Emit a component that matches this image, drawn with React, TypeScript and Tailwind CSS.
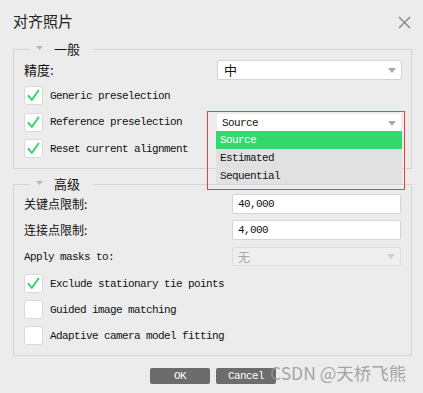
import React from "react";

const mono = "font-['Liberation_Mono',monospace] text-[11px] tracking-[-0.6px] leading-[14px]";
const cjk = "font-['Noto_Sans_CJK_SC',sans-serif]";

function Check() {
  return (
    <svg width="13" height="13" viewBox="0 0 13 13" fill="none">
      <path d="M1.5 6.8 L4.8 11 L11.5 1.5" stroke="#37d36c" strokeWidth="2" strokeLinecap="round" strokeLinejoin="round" />
    </svg>
  );
}

function Checkbox({ checked, label }: { checked: boolean; label: string }) {
  return (
    <div className="flex items-center h-[19px]">
      <div className="w-[19px] h-[19px] bg-white border border-[#d9d9d9] rounded-[3px] flex items-center justify-center">
        {checked && <Check />}
      </div>
      <span className={`${mono} ml-[7px] text-[#111]`}>{label}</span>
    </div>
  );
}

function Arrow({ light }: { light?: boolean }) {
  return (
    <svg width="8" height="5" viewBox="0 0 8 5">
      <path d="M0 0 L8 0 L4 5 Z" fill={light ? "#d0d0d0" : "#a9a9a9"} />
    </svg>
  );
}

function Legend({ text }: { text: string }) {
  return (
    <legend className="ml-[6px] px-[6px] h-[14px]">
      <div className="flex items-center h-[14px]">
        <svg width="7" height="4" viewBox="0 0 7 4" className="mb-[2px]">
          <path d="M0 0 L7 0 L3.5 4 Z" fill="#b4b4b4" />
        </svg>
        <span className={`${cjk} text-[13px] leading-[14px] text-[#111] ml-[11px] mr-[7px]`}>{text}</span>
      </div>
    </legend>
  );
}

export default function App() {
  return (
    <div className="w-[423px] h-[393px] bg-[#ececec] relative overflow-hidden text-[#111]">
      {/* Title bar */}
      <div className="flex items-center justify-between pt-[12px] pl-[13px] pr-[12px] h-[30px]">
        <span className={`${cjk} text-[15px] leading-[18px] text-[#222]`}>对齐照片</span>
        <svg width="13" height="13" viewBox="0 0 13 13" className="mt-[3px]">
          <path d="M1 1 L12 12 M12 1 L1 12" stroke="#8c8c8c" strokeWidth="1.5" />
        </svg>
      </div>

      {/* General */}
      <fieldset className="ml-[13px] mt-[12px] w-[399px] border border-[#d4d4d4] pl-[10px] pr-[10px] pt-[4px] pb-[10px]">
        <Legend text="一般" />
        <div className="flex items-center justify-between h-[20px]">
          <span className={`${cjk} text-[13px]`}>精度:</span>
          <div className="w-[185px] h-[20px] bg-white border border-[#d4d4d4] rounded-[2px] flex items-center justify-between pl-[6px] pr-[5px] mr-[-1px]">
            <span className={`${cjk} text-[13px]`}>中</span>
            <Arrow />
          </div>
        </div>
        <div className="flex flex-col gap-[7px] mt-[6px]">
          <Checkbox checked label="Generic preselection" />
          <div className="flex items-center justify-between">
            <Checkbox checked label="Reference preselection" />
            <div className="w-[184px] h-[18px] mt-[2px] bg-white flex items-center justify-between pl-[5px] pr-[5px]">
              <span className={mono}>Source</span>
              <Arrow />
            </div>
          </div>
          <Checkbox checked label="Reset current alignment" />
        </div>
      </fieldset>

      {/* Advanced */}
      <fieldset className="ml-[13px] mt-[8px] w-[399px] border border-[#d4d4d4] pl-[10px] pr-[10px] pt-[3px] pb-[10px]">
        <Legend text="高级" />
        <div className="flex flex-col">
          <div className="flex items-center justify-between h-[20px]">
            <span className={`${cjk} text-[12px]`}>关键点限制:</span>
            <div className="w-[169px] h-[20px] bg-white border border-[#d4d4d4] rounded-[2px] flex items-center pl-[5px]">
              <span className={mono}>40,000</span>
            </div>
          </div>
          <div className="flex items-center justify-between h-[20px] mt-[6px]">
            <span className={`${cjk} text-[12px]`}>连接点限制:</span>
            <div className="w-[169px] h-[20px] bg-white border border-[#d4d4d4] rounded-[2px] flex items-center pl-[5px]">
              <span className={mono}>4,000</span>
            </div>
          </div>
          <div className="flex items-center justify-between h-[19px] mt-[7px]">
            <span className={mono}>Apply masks to:</span>
            <div className="w-[169px] h-[19px] bg-[#efefef] border border-[#dedede] rounded-[2px] flex items-center justify-between pl-[5px] pr-[5px]">
              <span className={`${cjk} text-[12px] text-[#a8a8a8]`}>无</span>
              <Arrow light />
            </div>
          </div>
          <div className="flex flex-col gap-[7px] mt-[8px]">
            <Checkbox checked label="Exclude stationary tie points" />
            <Checkbox checked={false} label="Guided image matching" />
            <Checkbox checked={false} label="Adaptive camera model fitting" />
          </div>
        </div>
      </fieldset>

      {/* Buttons */}
      <div className="flex gap-[6px] ml-[150px] mt-[12px]">
        <div className={`${mono} w-[60px] h-[16px] bg-[#6c6c6c] rounded-[2px] text-white flex items-center justify-center`}>OK</div>
        <div className={`${mono} w-[60px] h-[16px] bg-[#6c6c6c] rounded-[2px] text-white flex items-center justify-center`}>Cancel</div>
      </div>

      {/* Open dropdown list with annotation frame */}
      <div className="absolute left-[207px] top-[111px] w-[198px] h-[79px] border border-[#f23d3d]">
        <div className="absolute left-[8px] top-[19px] w-[186px] bg-[#e1e1e1]">
          <div className={`${mono} h-[18px] bg-[#33d96d] text-white flex items-center pl-[4px]`}>Source</div>
          <div className={`${mono} h-[18px] flex items-center pl-[4px]`}>Estimated</div>
          <div className={`${mono} h-[17px] flex items-center pl-[4px]`}>Sequential</div>
        </div>
      </div>

      {/* Watermark */}
      <div className="absolute left-[270px] top-[362px] font-['Noto_Sans_CJK_SC',sans-serif] text-[17.5px] leading-[22px] text-[rgba(150,150,150,0.85)] whitespace-nowrap">
        CSDN @天桥飞熊
      </div>
    </div>
  );
}
